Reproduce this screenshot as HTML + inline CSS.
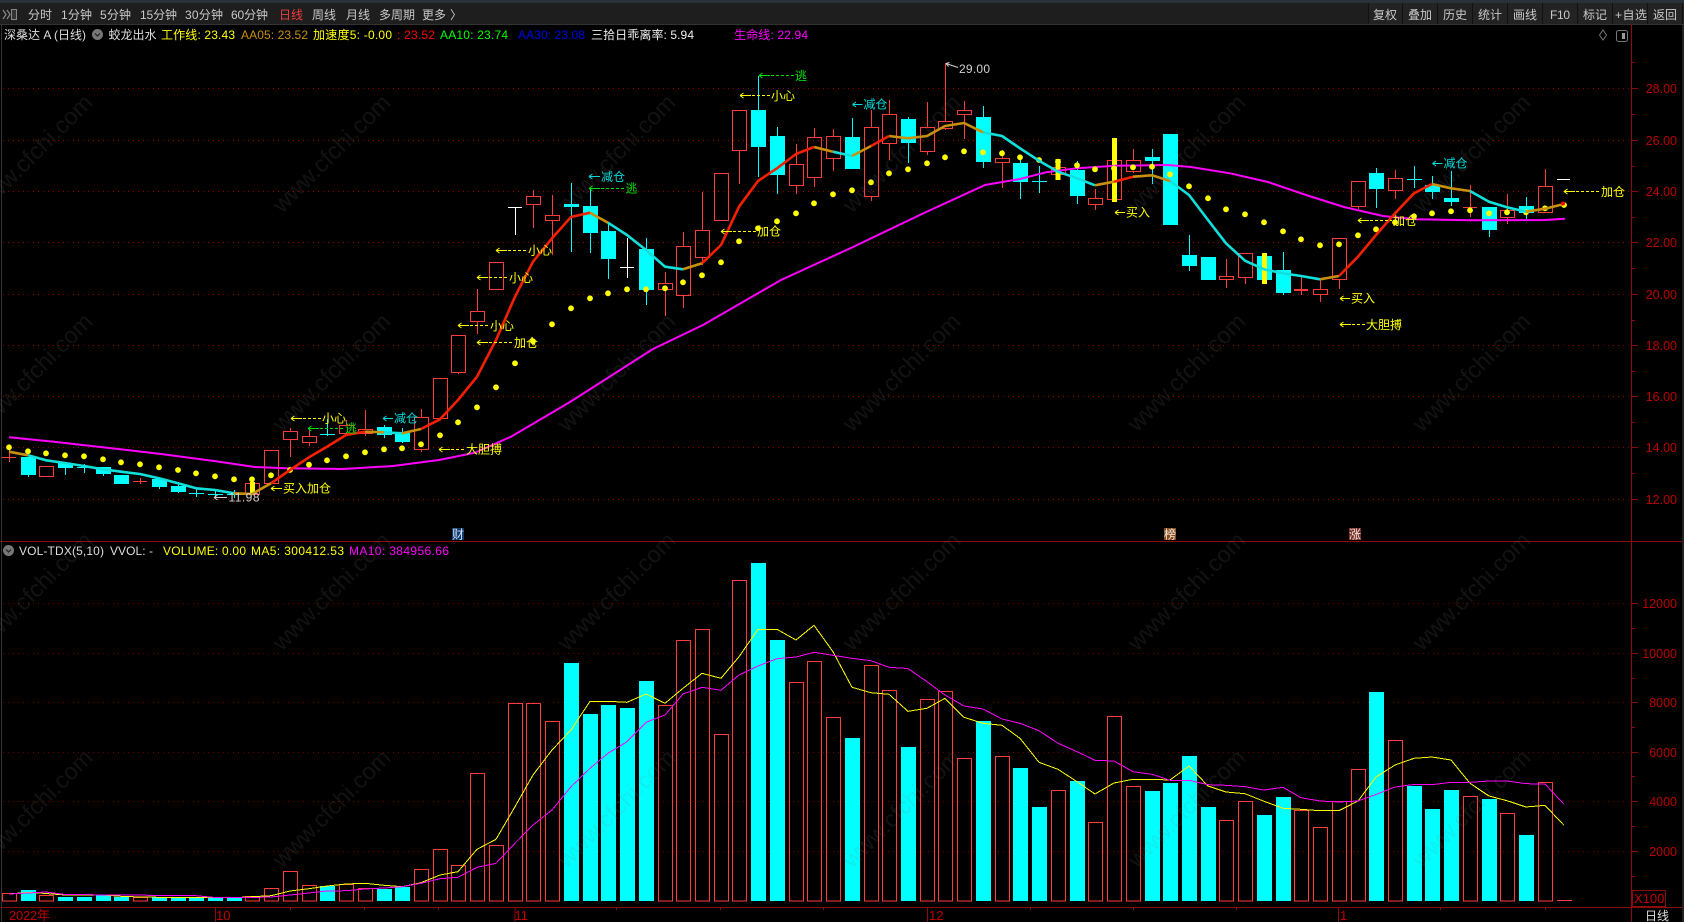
<!DOCTYPE html>
<html><head><meta charset="utf-8"><title>K</title>
<style>
html,body{margin:0;padding:0;background:#000;width:1684px;height:922px;overflow:hidden}
svg{display:block}
text{font-family:"Liberation Sans","Noto Sans CJK SC",sans-serif;font-size:12px}
</style></head><body>
<svg xmlns="http://www.w3.org/2000/svg" width="1684" height="922" viewBox="0 0 1684 922">
<rect width="1684" height="922" fill="#000"/>
<!-- toolbar -->
<rect width="1684" height="3" fill="#2b3138"/>
<rect y="3" width="1684" height="21" fill="#1e1e1e"/>
<rect y="24" width="1684" height="1" fill="#333"/>
<rect x="1368" y="3" width="316" height="21" fill="#232323"/>
<path d="M1368.5 3V24M1402.5 3V24M1437.5 3V24M1472.5 3V24M1507.5 3V24M1542.5 3V24M1577.5 3V24M1612.5 3V24M1647.5 3V24M1682.5 3V24" stroke="#111" shape-rendering="crispEdges"/>
<path d="M3 10l3 4.500-3 4.500M7 10l3 4.500-3 4.500" fill="none" stroke="#888" stroke-width="1.200"/>
<rect x="11.500" y="9.500" width="5" height="10" fill="#333" stroke="#888"/>
<g fill="#c8c8c8">
<text x="28" y="19">分时</text><text x="61" y="19" textLength="31">1分钟</text><text x="100" y="19" textLength="31">5分钟</text><text x="140" y="19" textLength="37">15分钟</text><text x="185" y="19" textLength="38">30分钟</text><text x="231" y="19" textLength="37">60分钟</text>
<text x="279" y="19" fill="#f03c3c">日线</text><text x="312" y="19">周线</text><text x="346" y="19">月线</text><text x="379" y="19">多周期</text><text x="422" y="19">更多</text><text x="450" y="19">〉</text>
<text x="1373" y="19">复权</text><text x="1408" y="19">叠加</text><text x="1443" y="19">历史</text><text x="1478" y="19">统计</text><text x="1513" y="19">画线</text><text x="1550" y="19" textLength="20">F10</text><text x="1583" y="19">标记</text><text x="1615" y="19" textLength="32">+自选</text><text x="1653" y="19">返回</text>
</g>
<!-- legend -->
<text x="4" y="39" fill="#ddd" textLength="82">深桑达 A (日线)</text>
<circle cx="97.500" cy="34.500" r="5.500" fill="#777"/><path d="M95 33.500l2.500 2.500 2.500-2.500" fill="none" stroke="#222" stroke-width="1.200"/>
<text x="108.500" y="39" fill="#ddd">蛟龙出水</text>
<text x="161" y="39" fill="#ff0" textLength="74">工作线: 23.43</text>
<text x="241" y="39" fill="#c8900c" textLength="67">AA05: 23.52</text>
<text x="313" y="39" fill="#ff0" textLength="79">加速度5: -0.00</text>
<text x="397" y="39" fill="#f00" textLength="38">: 23.52</text>
<text x="440" y="39" fill="#0f0" textLength="68">AA10: 23.74</text>
<text x="518" y="39" fill="#0000e6" textLength="67">AA30: 23.08</text>
<text x="591" y="39" fill="#eee" textLength="103">三拾日乖离率: 5.94</text>
<text x="734" y="39" fill="#f0f" textLength="74">生命线: 22.94</text>
<path d="M1603 30l3.500 5-3.500 5-3.500-5z" fill="none" stroke="#777"/>
<rect x="1616.500" y="30.500" width="11" height="11" rx="2" fill="none" stroke="#777"/><rect x="1622" y="33" width="3" height="6" fill="#999"/>
<!-- grid -->
<path d="M3 88.500H1631M3 140.500H1631M3 191.500H1631M3 242.500H1631M3 294.500H1631M3 345.500H1631M3 396.500H1631M3 447.500H1631M3 499.500H1631" stroke="#8c0000" stroke-dasharray="1 4" shape-rendering="crispEdges"/>
<path d="M3 603.500H1631M3 653.500H1631M3 702.500H1631M3 752.500H1631M3 801.500H1631M3 851.500H1631" stroke="#6c0000" stroke-dasharray="1 4" shape-rendering="crispEdges"/>
<!-- frame -->
<path d="M0 541.500H1684M0 907.500H1684M1631.500 24V922M515 907V922M215.500 907V922M927.500 907V922M1338.500 907V922M290.500 907V910M364.500 907V910M438.500 907V910M616.500 907V910M720.500 907V910M823.500 907V910M1030.500 907V910M1133.500 907V910M1236.500 907V910M1440.500 907V910M1545.500 907V910" stroke="#8a0c0c" fill="none" shape-rendering="crispEdges"/>
<rect x="1" y="25" width="1" height="897" fill="#333"/>
<rect x="1682" y="25" width="2" height="897" fill="#222"/>
<path d="M1632 88.500h6M1632 140.500h6M1632 191.500h6M1632 242.500h6M1632 294.500h6M1632 345.500h6M1632 396.500h6M1632 447.500h6M1632 499.500h6M1632 114.500h3M1632 166.500h3M1632 217.500h3M1632 268.500h3M1632 320.500h3M1632 371.500h3M1632 422.500h3M1632 473.500h3M1632 62.500h3M1632 603.500h6M1632 653.500h6M1632 702.500h6M1632 752.500h6M1632 801.500h6M1632 851.500h6M1632 628.500h3M1632 678.500h3M1632 727.500h3M1632 776.500h3M1632 826.500h3M1632 876.500h3" stroke="#8a0c0c" shape-rendering="crispEdges"/>
<g fill="#b80000" text-anchor="end">
<text x="1677" y="93" style="font-size:12.500px">28.00</text><text x="1677" y="145" style="font-size:12.500px">26.00</text><text x="1677" y="196" style="font-size:12.500px">24.00</text><text x="1677" y="247" style="font-size:12.500px">22.00</text><text x="1677" y="299" style="font-size:12.500px">20.00</text><text x="1677" y="350" style="font-size:12.500px">18.00</text><text x="1677" y="401" style="font-size:12.500px">16.00</text><text x="1677" y="452" style="font-size:12.500px">14.00</text><text x="1677" y="504" style="font-size:12.500px">12.00</text>
<text x="1677" y="608" style="font-size:12.500px">12000</text><text x="1677" y="658" style="font-size:12.500px">10000</text><text x="1677" y="707" style="font-size:12.500px">8000</text><text x="1677" y="757" style="font-size:12.500px">6000</text><text x="1677" y="806" style="font-size:12.500px">4000</text><text x="1677" y="856" style="font-size:12.500px">2000</text>
</g>
<rect x="1632.500" y="890.500" width="33" height="16" fill="none" stroke="#8a0c0c"/>
<text x="1634" y="903" fill="#c00000" style="font-size:13px">X100</text>
<g fill="#c00000"><text x="9" y="920" textLength="41" style="font-size:13px">2022年</text><text x="216" y="920" style="font-size:13px">10</text><text x="514.500" y="920" style="font-size:13px">11</text><text x="929" y="920" style="font-size:13px">12</text><text x="1340" y="920" style="font-size:13px">1</text></g>
<text x="1645" y="920" fill="#ddd">日线</text>
<!-- tags -->
<rect x="452" y="528" width="12" height="12" fill="#0b3a6e"/><text x="452" y="538.500" fill="#dde">财</text>
<rect x="1164" y="528" width="12" height="12" fill="#8a4a20"/><text x="1164" y="538.500" fill="#eed">榜</text>
<rect x="1349" y="528" width="12" height="12" fill="#7a2a2a"/><text x="1349" y="538.500" fill="#eed">涨</text>
<!-- volume legend -->
<circle cx="8.500" cy="550.500" r="5.500" fill="#777"/><path d="M6 549.500l2.500 2.500 2.500-2.500" fill="none" stroke="#222" stroke-width="1.200"/>
<text x="19" y="555" fill="#ddd" textLength="85">VOL-TDX(5,10)</text>
<text x="110" y="555" fill="#ddd" textLength="43">VVOL: -</text>
<text x="163" y="555" fill="#ff0" textLength="83">VOLUME: 0.00</text>
<text x="251" y="555" fill="#ff0" textLength="93">MA5: 300412.53</text>
<text x="349" y="555" fill="#f0f" textLength="100">MA10: 384956.66</text>
<!-- volume bars -->
<g shape-rendering="crispEdges">
<path fill="#0ff" d="M21 890h15v11h-15zM58 897h15v4h-15zM77 897h15v4h-15zM96 895h15v6h-15zM114 897h15v4h-15zM152 897h15v4h-15zM171 898h15v3h-15zM189 898h15v3h-15zM208 898h15v3h-15zM227 898h15v3h-15zM320 886h15v15h-15zM377 889h15v12h-15zM395 887h15v14h-15zM564 663h15v238h-15zM583 714h15v187h-15zM601 705h15v196h-15zM620 708h15v193h-15zM639 681h15v220h-15zM751 563h15v338h-15zM770 640h15v261h-15zM845 738h15v163h-15zM901 747h15v154h-15zM976 721h15v180h-15zM1013 768h15v133h-15zM1032 807h15v94h-15zM1070 781h15v120h-15zM1145 791h15v110h-15zM1163 783h15v118h-15zM1182 756h15v145h-15zM1201 807h15v94h-15zM1257 815h15v86h-15zM1276 797h15v104h-15zM1369 692h15v209h-15zM1407 786h15v115h-15zM1425 809h15v92h-15zM1444 790h15v111h-15zM1482 799h15v102h-15zM1519 835h15v66h-15z"/>
<path fill="none" stroke="#ff3c3c" d="M2.500 901V893.500h14V901zM39.500 901V895.500h14V901zM133.500 901V897.500h14V901zM245.500 901V896.500h14V901zM264.500 901V888.500h14V901zM283.500 901V871.500h14V901zM302.500 901V885.500h14V901zM339.500 901V884.500h14V901zM358.500 901V888.500h14V901zM414.500 901V869.500h14V901zM433.500 901V849.500h14V901zM451.500 901V865.500h14V901zM470.500 901V773.500h14V901zM489.500 901V845.500h14V901zM508.500 901V703.500h14V901zM526.500 901V703.500h14V901zM545.500 901V721.500h14V901zM658.500 901V705.500h14V901zM676.500 901V640.500h14V901zM695.500 901V629.500h14V901zM714.500 901V734.500h14V901zM732.500 901V580.500h14V901zM789.500 901V682.500h14V901zM807.500 901V661.500h14V901zM826.500 901V717.500h14V901zM864.500 901V665.500h14V901zM882.500 901V690.500h14V901zM920.500 901V699.500h14V901zM938.500 901V691.500h14V901zM957.500 901V758.500h14V901zM995.500 901V756.500h14V901zM1051.500 901V790.500h14V901zM1088.500 901V822.500h14V901zM1107.500 901V716.500h14V901zM1126.500 901V786.500h14V901zM1219.500 901V820.500h14V901zM1238.500 901V801.500h14V901zM1294.500 901V810.500h14V901zM1313.500 901V827.500h14V901zM1332.500 901V801.500h14V901zM1351.500 901V769.500h14V901zM1388.500 901V740.500h14V901zM1463.500 901V796.500h14V901zM1500.500 901V813.500h14V901zM1538.500 901V782.500h14V901zM1557 900.500h15"/>
<polyline fill="none" stroke="#ff0" points="9,894 28,892.300 46,893.500 65,895 84,895 103,895 121,896.300 140,897 159,897.300 178,897.700 196,897.700 215,897.700 234,897.700 252,896.700 271,895.700 290,891 309,888.700 327,886 346,884 365,883.300 384,885.300 402,886.700 421,882.700 440,875 458,871.700 477,849.300 496,839.300 515,806.700 533,775 552,750 571,730 590,701.300 608,701.300 627,702.300 646,694 665,703.300 683,688.300 702,673.300 721,678.300 739,656.700 758,629.300 777,629.300 796,640 814,625.300 833,651.700 852,687.300 871,692.700 889,694.300 908,711.300 927,708.300 945,698.300 964,717.300 983,723.300 1002,725.300 1020,738.300 1039,762.300 1058,769.300 1077,781.700 1095,794 1114,783 1133,779.300 1152,779.300 1170,780 1189,766 1208,786 1226,792 1245,793.700 1264,801.300 1283,808.300 1301,809.300 1320,810.700 1339,810.700 1358,801 1376,777 1395,765 1414,758.300 1432,757 1451,760 1470,783.300 1489,796 1507,800.700 1526,807 1545,805.300 1564,825.300"/>
<polyline fill="none" stroke="#f0f" points="9,894 28,893 46,892 65,894.500 84,894.500 103,895 121,895 140,895 159,895.700 178,895.700 196,895.700 215,897.500 234,897.500 252,897.500 271,897 290,895 309,893 327,891 346,890.700 365,889 384,888 402,886.700 421,883.300 440,878.700 458,877.300 477,867.300 496,863.300 515,843.300 533,825 552,810 571,786.700 590,768.300 608,753.300 627,741.700 646,722.300 665,715 683,694 702,687.300 721,690.300 739,675 758,666 777,658.700 796,657 814,652.300 833,655.300 852,658.300 871,660.700 889,667.300 908,668.500 927,681.700 945,695 964,706 983,709 1002,719 1020,723.300 1039,730.700 1058,743.300 1077,751.700 1095,760.300 1114,761 1133,771.700 1152,774.300 1170,780.300 1189,780.300 1208,784.700 1226,785.300 1245,786.700 1264,790 1283,787.300 1301,797.700 1320,801 1339,802 1358,801 1376,794.500 1395,787 1414,784.500 1432,784.700 1451,782.300 1470,782.300 1489,781 1507,781 1526,783.700 1545,784 1564,804.300"/>
</g>
<!-- candles -->
<g shape-rendering="crispEdges">
<path fill="none" stroke="#ff3c3c" d="M39.500 466.500h14v10h-14zM245.500 483.500h14v11h-14zM264.500 450.500h14v33h-14zM283.500 431.500h14v8h-14zM302.500 436.500h14v6h-14zM339.500 425.500h14v8h-14zM358.500 429.500h14v4h-14zM414.500 417.500h14v32h-14zM433.500 378.500h14v40h-14zM451.500 335.500h14v37h-14zM470.500 311.500h14v10h-14zM489.500 262.500h14v27h-14zM526.500 196.500h14v8h-14zM545.500 215.500h14v5h-14zM658.500 283.500h14v6h-14zM676.500 246.500h14v49h-14zM695.500 230.500h14v27h-14zM714.500 173.500h14v47h-14zM732.500 110.500h14v40h-14zM789.500 164.500h14v21h-14zM807.500 137.500h14v40h-14zM826.500 136.500h14v22h-14zM864.500 127.500h14v69h-14zM882.500 114.500h14v29h-14zM920.500 127.500h14v24h-14zM938.500 121.500h14v7h-14zM957.500 110.500h14v4h-14zM995.500 158.500h14v4h-14zM1051.500 167.500h14v7h-14zM1088.500 198.500h14v6h-14zM1107.500 160.500h14v39h-14zM1126.500 160.500h14v11h-14zM1219.500 276.500h14v3h-14zM1238.500 253.500h14v24h-14zM1313.500 289.500h14v5h-14zM1332.500 238.500h14v41h-14zM1351.500 181.500h14v25h-14zM1388.500 178.500h14v12h-14zM1500.500 210.500h14v7h-14zM1538.500 186.500h14v26h-14zM2 457.500h14M133 481.500h14M1294 290.500h14M1294 289.500h14M1463 207.500h14M9.500 450V462M140.500 478V484M290.500 428V431M290.500 440V457M309.500 430V436M309.500 443V446M346.500 420V425M365.500 410V429M365.500 434V436M421.500 409V417M421.500 450V452M458.500 373V374M477.500 289V311M477.500 322V334M533.500 190V196M533.500 205V228M552.500 195V215M552.500 221V255M665.500 272V283M665.500 290V316M683.500 232V246M683.500 296V308M702.500 192V230M702.500 258V265M739.500 151V184M796.500 144V164M796.500 186V194M814.500 128V137M814.500 178V187M833.500 129V136M833.500 159V171M871.500 110V127M871.500 197V201M889.500 100V114M889.500 144V160M927.500 102V127M927.500 152V155M945.500 63V121M945.500 129V130M964.500 101V110M964.500 115V139M1002.500 150V158M1002.500 163V188M1095.500 189V198M1095.500 205V210M1133.500 149V160M1133.500 172V173M1226.500 259V276M1226.500 280V288M1245.500 278V284M1301.500 275V295M1320.500 280V289M1320.500 295V302M1339.500 280V289M1358.500 207V209M1395.500 170V178M1395.500 191V199M1470.500 185V217M1507.500 194V210M1507.500 218V224M1545.500 169V186"/>
<path fill="#0ff" d="M21 457h15v18h-15zM58 463h15v5h-15zM96 467h15v7h-15zM114 475h15v9h-15zM152 479h15v8h-15zM171 486h15v6h-15zM377 427h15v8h-15zM395 433h15v9h-15zM564 204h15v3h-15zM583 206h15v27h-15zM601 231h15v28h-15zM639 249h15v41h-15zM751 110h15v37h-15zM770 136h15v39h-15zM845 137h15v32h-15zM901 119h15v24h-15zM976 117h15v45h-15zM1013 163h15v19h-15zM1070 170h15v26h-15zM1145 157h15v4h-15zM1163 134h15v91h-15zM1182 255h15v11h-15zM1201 257h15v23h-15zM1257 256h15v24h-15zM1276 270h15v23h-15zM1369 173h15v16h-15zM1425 185h15v7h-15zM1444 198h15v4h-15zM1482 207h15v23h-15zM1519 206h15v7h-15z"/>
<path stroke="#0ff" fill="none" d="M77 467.500h15M189 493.500h15M208 494.500h15M227 494.500h15M320 434.500h15M1032 181.500h15M1407 179.500h15M28.500 475V477M65.500 468V475M84.500 464V473M103.500 474V476M159.500 487V489M178.500 482V486M178.500 492V493M196.500 488V497M215.500 489V498M234.500 490V498M327.500 419V436M384.500 425V427M384.500 435V438M402.500 428V433M402.500 442V443M571.500 183V252M590.500 188V206M590.500 233V253M608.500 222V279M646.500 238V305M758.500 76V177M777.500 127V194M852.500 118V137M908.500 117V163M983.500 106V168M1020.500 155V199M1039.500 166V193M1077.500 161V204M1152.500 149V184M1189.500 235V271M1283.500 252V295M1376.500 168V208M1414.500 166V188M1432.500 176V199M1451.500 171V206M1489.500 230V237M1526.500 197V219"/>
<path stroke="#fff" fill="none" d="M508 207.500h14M515.500 207V235M620 267.500h14M627.500 238V278M1557 179.500h13"/>
<path fill="#ff0" d="M250 482h5v13h-5zM1055.500 159h5v21h-5zM1112 138h5v64h-5zM1262 253h5v31h-5z"/>
</g>
<!-- life line -->
<polyline fill="none" stroke="#f0f" stroke-width="2" points="9,437.300 54,441.700 107,447.700 161,454 214,461 255,467 286,468.300 343,469 393,466 439,460 475,452.700 511,436.700 570,402 653,349 703,325 781,280 853,247 924,213 985,185 1020,179 1046,172.300 1077,168.300 1115,165.700 1168,165 1191,167 1230,173.300 1268,182 1306,195 1344,207 1383,216 1417,219.300 1471,220.300 1545,220 1565,218.700"/>
<!-- dots -->
<path fill="none" stroke="#ff0" stroke-width="5.800" stroke-linecap="round" d="M9 447.300h.01M28 451.300h.01M46 453.300h.01M65 455.300h.01M84 456.300h.01M103 459.300h.01M121 462.300h.01M140 464.300h.01M159 467.300h.01M178 470h.01M196 473.300h.01M215 476.300h.01M234 479.300h.01M252 479.300h.01M271 475.300h.01M290 470h.01M309 464.700h.01M327 460.300h.01M346 456.300h.01M365 452.300h.01M384 449.300h.01M402 448.300h.01M421 444.300h.01M440 435.300h.01M458 422.300h.01M477 407.300h.01M496 387.300h.01M515 363.300h.01M533 341.300h.01M552 324.300h.01M571 308.300h.01M590 298.300h.01M608 293.300h.01M627 289.300h.01M646 289.300h.01M665 288.300h.01M683 282.300h.01M702 275.300h.01M721 262.300h.01M739 241.300h.01M758 228.300h.01M777 221.300h.01M796 213.300h.01M814 203.300h.01M833 194.300h.01M852 190.300h.01M871 182.300h.01M889 173.300h.01M908 169.300h.01M927 163.300h.01M945 157.300h.01M964 151.300h.01M983 152.300h.01M1002 153.300h.01M1020 157.300h.01M1039 160h.01M1058 161.700h.01M1077 165.300h.01M1095 169.300h.01M1114 168.300h.01M1133 167.300h.01M1152 166.700h.01M1170 174.300h.01M1189 186.300h.01M1208 198.300h.01M1226 209.300h.01M1245 214.300h.01M1264 222.300h.01M1283 231.300h.01M1301 239.300h.01M1320 245.300h.01M1339 244.300h.01M1358 235.300h.01M1376 229.300h.01M1395 222.300h.01M1414 216.300h.01M1432 213.300h.01M1451 211.300h.01M1470 210.300h.01M1489 213.300h.01M1507 212.300h.01M1526 212.300h.01M1545 208.300h.01M1564 205h.01"/>
<!-- main curve -->
<g fill="none" stroke-width="2.600" stroke-linejoin="round">
<polyline stroke="#10e0dc" points="28,455.300 46,460.300 65,463 84,466 103,469.300 121,471.700 140,474 159,478.300 178,483.300 196,488.300 215,490 234,493.300"/>
<polyline stroke="#10e0dc" points="384,432.300 402,433.300"/>
<polyline stroke="#10e0dc" points="608,222.700 627,235 646,250 665,266.700 683,269.300"/>
<polyline stroke="#10e0dc" points="833,151.700 852,156"/>
<polyline stroke="#10e0dc" points="983,132.300 1002,136 1020,148.300 1039,160.700 1058,171.700 1077,178.300 1095,185.300"/>
<polyline stroke="#10e0dc" points="1170,181 1189,195 1208,220 1226,243.300 1245,260.700 1264,269.300 1283,273.300 1301,276 1320,279.300"/>
<polyline stroke="#10e0dc" points="1470,191 1489,201.700 1507,207.300 1526,211.700"/>
<polyline stroke="#c8900c" points="9,451.700 28,455.300"/>
<polyline stroke="#c8900c" points="234,493.300 252,494 271,483.300"/>
<polyline stroke="#c8900c" points="365,431.700 384,432.300"/>
<polyline stroke="#c8900c" points="402,433.300 421,429"/>
<polyline stroke="#c8900c" points="590,212.700 608,222.700"/>
<polyline stroke="#c8900c" points="683,269.300 702,263.300"/>
<polyline stroke="#c8900c" points="814,147 833,151.700"/>
<polyline stroke="#c8900c" points="852,156 871,146"/>
<polyline stroke="#c8900c" points="889,136 908,138.300 927,136 945,126 964,123 983,132.300"/>
<polyline stroke="#c8900c" points="1095,185.300 1114,181.700"/>
<polyline stroke="#c8900c" points="1133,176.700 1152,175.300 1170,181"/>
<polyline stroke="#c8900c" points="1320,279.300 1339,276"/>
<polyline stroke="#c8900c" points="1432,184 1451,188.300 1470,191"/>
<polyline stroke="#c8900c" points="1526,211.700 1545,208.700 1564,204"/>
<polyline stroke="#f52000" points="271,483.300 290,470 309,457.300 327,446.700 346,435 365,431.700"/>
<polyline stroke="#f52000" points="421,429 440,419.300 458,400 477,376.700 496,340 515,296.700 533,261.700 552,238.300 571,217 590,212.700"/>
<polyline stroke="#f52000" points="702,263.300 721,245 739,206.700 758,181 777,168.300 796,154 814,147"/>
<polyline stroke="#f52000" points="871,146 889,136"/>
<polyline stroke="#f52000" points="1114,181.700 1133,176.700"/>
<polyline stroke="#f52000" points="1339,276 1358,256.700 1376,235 1395,213.300 1414,193.300 1432,184"/>
</g>
<circle cx="1563" cy="203.500" r="2" fill="#f00"/>
<!-- label arrows -->
<path fill="none" stroke="#ff0" d="M291 418.500l3.500-2.500M291 418.500l3.500 2.500M291 418.500h11M439 449.500l3.500-2.500M439 449.500l3.500 2.500M439 449.500h11M271 488.500l3.500-2.500M271 488.500l3.500 2.500M271 488.500h11M458 325.500l3.500-2.500M458 325.500l3.500 2.500M458 325.500h11M477 342.500l3.500-2.500M477 342.500l3.500 2.500M477 342.500h11M477 277.500l3.500-2.500M477 277.500l3.500 2.500M477 277.500h11M496 250.500l3.500-2.500M496 250.500l3.500 2.500M496 250.500h11M721 231.500l3.500-2.500M721 231.500l3.500 2.500M721 231.500h11M740 95.500l3.500-2.500M740 95.500l3.500 2.500M740 95.500h11M1115 212.500l3.500-2.500M1115 212.500l3.500 2.500M1115 212.500h10M1340 298.500l3.500-2.500M1340 298.500l3.500 2.500M1340 298.500h10M1340 324.500l3.500-2.500M1340 324.500l3.500 2.500M1340 324.500h11M1358 220.500l3.500-2.500M1358 220.500l3.500 2.500M1358 220.500h11M1564 191.500l3.500-2.500M1564 191.500l3.500 2.500M1564 191.500h11"/>
<path fill="none" stroke="#ff0" stroke-dasharray="3 2" d="M303 418.500H321M451 449.500H465M470 342.500H470M470 325.500H489M489 342.500H513M489 277.500H508M508 250.500H527M733 231.500H756M752 95.500H770M1352 324.500H1365M1370 220.500H1392M1576 191.500H1600"/>
<path fill="none" stroke="#00e000" d="M308 428.500l3.500-2.500M308 428.500l3.500 2.500M308 428.500h11M589 188.500l3.500-2.500M589 188.500l3.500 2.500M589 188.500h11M759 75.500l3.500-2.500M759 75.500l3.500 2.500M759 75.500h11"/>
<path fill="none" stroke="#00e000" stroke-dasharray="3 2" d="M320 428.500H344M601 188.500H625M771 75.500H794"/>
<path fill="none" stroke="#00dede" d="M383 418.500l3.500-2.500M383 418.500l3.500 2.500M383 418.500h10M589 176.500l3.500-2.500M589 176.500l3.500 2.500M589 176.500h11M852.500 104.500l3.500-2.500M852.500 104.500l3.500 2.500M852.500 104.500h10M1432.500 163.500l3.500-2.500M1432.500 163.500l3.500 2.500M1432.500 163.500h10"/>
<path fill="none" stroke="#d0d0d0" d="M214 497.500l3.500-2.500M214 497.500l3.500 2.500M214 497.500h13M946 63.500l2.500 3M946 63.500l3.500-1M946 63.500l12 4"/>
<!-- labels -->
<g fill="#ff0">
<text x="322" y="422.500">小心</text><text x="466" y="453.500">大胆搏</text><text x="283" y="492.500">买入加仓</text>
<text x="490" y="330">小心</text><text x="514" y="347">加仓</text><text x="509" y="282">小心</text><text x="528" y="254.500">小心</text>
<text x="757" y="235.500">加仓</text><text x="771" y="100">小心</text><text x="1126" y="216.500">买入</text><text x="1351" y="302.500">买入</text><text x="1366" y="329">大胆搏</text><text x="1393" y="225">加仓</text><text x="1601" y="196">加仓</text>
</g>
<g fill="#00e000"><text x="345" y="432.500">逃</text><text x="625.500" y="192.500">逃</text><text x="795" y="80">逃</text></g>
<g fill="#00dede"><text x="394" y="422.500">减仓</text><text x="601" y="181">减仓</text><text x="863.500" y="108.500">减仓</text><text x="1443.500" y="167.500">减仓</text></g>
<g fill="#d0d0d0"><text x="228.500" y="501.500" textLength="31">11.98</text><text x="959" y="73" textLength="31">29.00</text></g>
<!-- watermark -->
<g fill="#808080" fill-opacity=".14" text-anchor="middle">
<text transform="translate(39 159) rotate(-45)" style="font-size:23.500px">www.cfchi.com</text><text transform="translate(39 378) rotate(-45)" style="font-size:23.500px">www.cfchi.com</text><text transform="translate(39 597) rotate(-45)" style="font-size:23.500px">www.cfchi.com</text><text transform="translate(39 814) rotate(-45)" style="font-size:23.500px">www.cfchi.com</text>
<text transform="translate(337 159) rotate(-45)" style="font-size:23.500px">www.cfchi.com</text><text transform="translate(337 378) rotate(-45)" style="font-size:23.500px">www.cfchi.com</text><text transform="translate(337 597) rotate(-45)" style="font-size:23.500px">www.cfchi.com</text><text transform="translate(337 814) rotate(-45)" style="font-size:23.500px">www.cfchi.com</text>
<text transform="translate(622 159) rotate(-45)" style="font-size:23.500px">www.cfchi.com</text><text transform="translate(622 378) rotate(-45)" style="font-size:23.500px">www.cfchi.com</text><text transform="translate(622 597) rotate(-45)" style="font-size:23.500px">www.cfchi.com</text><text transform="translate(622 814) rotate(-45)" style="font-size:23.500px">www.cfchi.com</text>
<text transform="translate(907 159) rotate(-45)" style="font-size:23.500px">www.cfchi.com</text><text transform="translate(907 378) rotate(-45)" style="font-size:23.500px">www.cfchi.com</text><text transform="translate(907 597) rotate(-45)" style="font-size:23.500px">www.cfchi.com</text><text transform="translate(907 814) rotate(-45)" style="font-size:23.500px">www.cfchi.com</text>
<text transform="translate(1192 159) rotate(-45)" style="font-size:23.500px">www.cfchi.com</text><text transform="translate(1192 378) rotate(-45)" style="font-size:23.500px">www.cfchi.com</text><text transform="translate(1192 597) rotate(-45)" style="font-size:23.500px">www.cfchi.com</text><text transform="translate(1192 814) rotate(-45)" style="font-size:23.500px">www.cfchi.com</text>
<text transform="translate(1477 159) rotate(-45)" style="font-size:23.500px">www.cfchi.com</text><text transform="translate(1477 378) rotate(-45)" style="font-size:23.500px">www.cfchi.com</text><text transform="translate(1477 597) rotate(-45)" style="font-size:23.500px">www.cfchi.com</text><text transform="translate(1477 814) rotate(-45)" style="font-size:23.500px">www.cfchi.com</text>
</g>
</svg>
</body></html>
